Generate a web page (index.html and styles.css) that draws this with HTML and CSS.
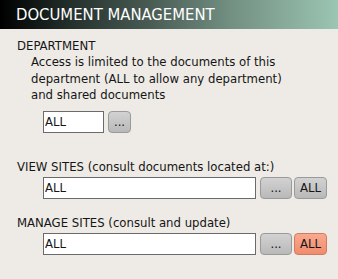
FILE: index.html
```html
<!DOCTYPE html>
<html>
<head>
<meta charset="utf-8">
<link rel="stylesheet" href="styles.css">
</head>
<body>
<div class="header">DOCUMENT MANAGEMENT</div>
<div class="content">
  <div class="label">DEPARTMENT</div>
  <div class="desc">Access is limited to the documents of this<br>department (ALL to allow any department)<br>and shared documents</div>
  <div class="row row-dept">
    <input class="field field-short" type="text" value="ALL">
    <button class="btn btn-dots">...</button>
  </div>

  <div class="label label-view">VIEW SITES (consult documents located at:)</div>
  <div class="row">
    <input class="field field-long" type="text" value="ALL">
    <button class="btn btn-dots">...</button>
    <button class="btn btn-all">ALL</button>
  </div>

  <div class="label label-manage">MANAGE SITES (consult and update)</div>
  <div class="row">
    <input class="field field-long" type="text" value="ALL">
    <button class="btn btn-dots">...</button>
    <button class="btn btn-all btn-active">ALL</button>
  </div>
</div>
</body>
</html>
```

FILE: styles.css
```css
html, body {
  margin: 0;
  padding: 0;
}
body {
  background: #eeebe6;
  font-family: "DejaVu Sans Condensed", "DejaVu Sans", sans-serif;
  font-size: 13px;
  color: #151515;
  width: 338px;
  height: 279px;
  overflow: hidden;
}
.header {
  height: 29px;
  line-height: 30px;
  padding-left: 16px;
  font-size: 16.5px;
  color: #ffffff;
  background: linear-gradient(to right, #000000 0%, #222e2a 20%, #4a5d55 45%, #728f82 68%, #9cc5b3 100%);
}
.content {
  padding-left: 17px;
  padding-top: 9px;
}
.label {
  line-height: 16px;
}
.desc {
  padding-left: 14px;
  line-height: 16.5px;
}
.row {
  display: flex;
  align-items: center;
  gap: 3px;
  padding-left: 26px;
  margin-top: 2px;
}
.row-dept {
  margin-top: 7px;
}
.label-view {
  margin-top: 26px;
}
.label-manage {
  margin-top: 16px;
}
.field {
  box-sizing: border-box;
  height: 22px;
  border: 1px solid #6b6b6b;
  background: #ffffff;
  font-family: inherit;
  font-size: 13px;
  color: #151515;
  padding: 0 1px;
  margin: 0;
  outline: none;
}
.field-short {
  width: 61px;
}
.field-long {
  width: 213px;
}
.btn {
  box-sizing: border-box;
  height: 22px;
  margin: 0;
  padding: 0;
  border: 1px solid #9a9a9a;
  border-radius: 4px;
  background: linear-gradient(#d2d2d2, #b9b9b9);
  font-family: inherit;
  font-size: 13px;
  color: #151515;
}
.btn-dots {
  width: 32px;
  margin-left: 1px;
}
.row-dept .btn-dots {
  width: 23px;
}
.btn-all {
  width: 33px;
  margin-left: -1px;
}
.btn-active {
  border-color: #d07a5e;
  background: linear-gradient(#f9a98e, #f08c6e);
}
```
